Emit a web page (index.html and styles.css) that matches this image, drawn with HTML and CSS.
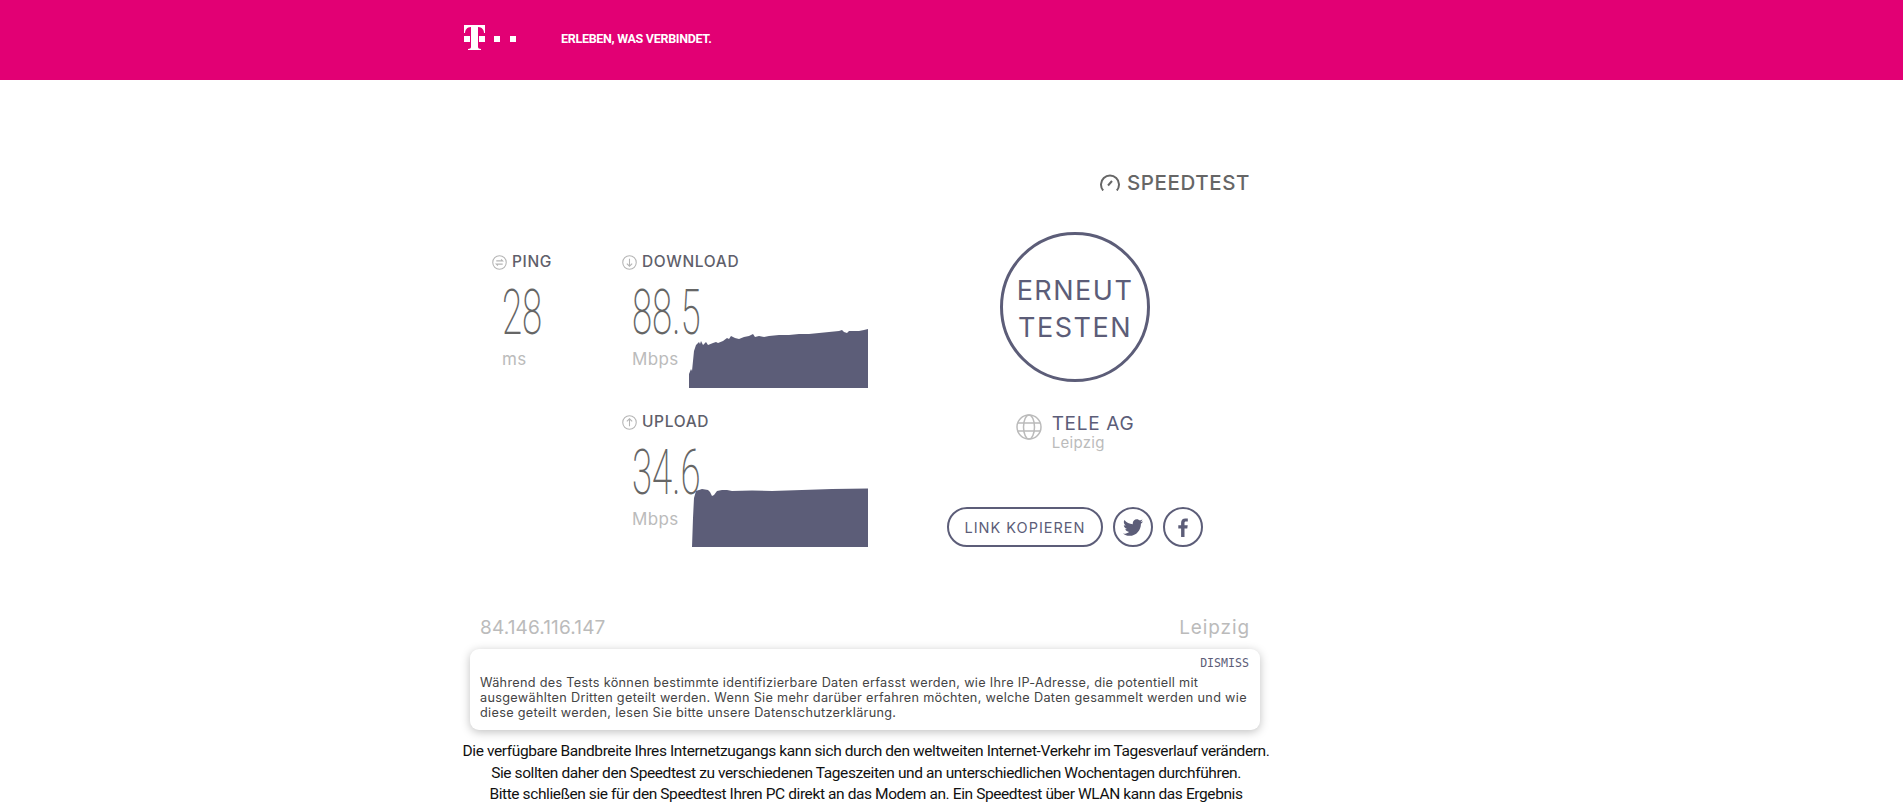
FILE: index.html
```html
<!DOCTYPE html>
<html lang="de">
<head>
    <meta charset="UTF-8">
    <meta name="viewport" content="width=device-width, initial-scale=1.0">
    <title>Speedtest</title>
    <link rel="stylesheet" href="styles.css">
</head>
<body>

<header class="top-bar">
    <svg class="t-logo" width="52" height="26" viewBox="0 0 52 26" fill="#fff">
        <path d="M0 0h21v8h-1c0-3-2-6-6-6v20c0 1 1 2 3 2v1H4v-1c2 0 3-1 3-2V2C3 2 1 5 1 8H0z"/>
        <rect x="0" y="11" width="6" height="6"/>
        <rect x="15" y="11" width="6" height="6"/>
        <rect x="30" y="11" width="6" height="6"/>
        <rect x="46" y="11" width="6" height="6"/>
    </svg>
    <span class="tagline">ERLEBEN, WAS VERBINDET.</span>
</header>

<main class="page">
    <div class="speedtest-brand">
        <svg width="20" height="17" viewBox="0 0 20 17" fill="none" stroke="#666" stroke-width="2">
            <path d="M3.200 16.500A9 9 0 1 1 16.800 16.500"/>
            <path d="M8 11.500l4-4.500"/>
        </svg>
        <span>SPEEDTEST</span>
    </div>

    <section class="results">
        <div class="ping-col">
            <div class="metric-label">
                <svg class="label-icon" viewBox="0 0 14 14" fill="none" stroke="#b5b5b5">
                    <circle cx="7" cy="7" r="6.300"/>
                    <path d="M4 5.500h6L8.500 4M10 8.500H4L5.500 10"/>
                </svg>
                PING
            </div>
            <div class="metric-value">28</div>
            <div class="metric-unit">ms</div>
        </div>

        <div class="speed-col">
            <div class="metric">
                <div class="metric-label">
                    <svg class="label-icon" viewBox="0 0 14 14" fill="none" stroke="#b5b5b5">
                        <circle cx="7" cy="7" r="6.300"/>
                        <path d="M7 3.500v7M4.500 8L7 10.500 9.500 8"/>
                    </svg>
                    DOWNLOAD
                </div>
                <div class="metric-value">88.5</div>
                <div class="metric-unit">Mbps</div>
                <svg class="graph graph-down" width="179" height="59" viewBox="0 0 179 59" fill="#5c5d78">
                    <path d="M0 59V45L2 40 3 42 5 22 7 16 10 13 11 15 12 12 14 16 17 13 19 16 24 14 27 13 29 14 34 12 38 9 40 10 42 7 46 9 50 10 55 8 60 7 64 5 66 8 70 7 75 8 80 7 90 6 100 6 110 5 120 5 130 4 140 3 150 2 153 1 155 3 158 4 160 2 165 2 170 2 175 1 179 0V59z"/>
                </svg>
            </div>
            <div class="metric metric-upload">
                <div class="metric-label">
                    <svg class="label-icon" viewBox="0 0 14 14" fill="none" stroke="#b5b5b5">
                        <circle cx="7" cy="7" r="6.300"/>
                        <path d="M7 10.500v-7M4.500 6L7 3.500 9.500 6"/>
                    </svg>
                    UPLOAD
                </div>
                <div class="metric-value">34.6</div>
                <div class="metric-unit">Mbps</div>
                <svg class="graph graph-up" width="176" height="59" viewBox="0 0 176 59" fill="#5c5d78">
                    <path d="M0 59L1 30 2 10 4 3 10 1 16 2 18 4 20 8 22 7 25 3 30 2 35 2 40 3 60 2.500 80 3 110 2 140 1 176 .5V59z"/>
                </svg>
            </div>
        </div>

        <div class="action-col">
            <button class="go-button">ERNEUT<br>TESTEN</button>
            <div class="isp">
                <svg width="26" height="26" viewBox="0 0 26 26" fill="none" stroke="#bbb" stroke-width="1.500">
                    <circle cx="13" cy="13" r="12"/>
                    <ellipse cx="13" cy="13" rx="5.500" ry="12"/>
                    <path d="M2 9h22M2 17h22"/>
                </svg>
                <div>
                    <div class="isp-name">TELE AG</div>
                    <div class="isp-city">Leipzig</div>
                </div>
            </div>
            <div class="share-row">
                <button class="link-button">LINK KOPIEREN</button>
                <button class="round-button">
                    <svg width="20" height="17" viewBox="0 0 24 20" fill="#5c5d78">
                        <path d="M24 2.400c-.900.400-1.800.700-2.800.800 1-.600 1.800-1.600 2.200-2.700-1 .600-2 1-3.100 1.200C19.300.700 18 0 16.600 0c-2.700 0-4.900 2.200-4.900 4.900 0 .400 0 .800.100 1.100C7.700 5.800 4.100 3.900 1.700.900 1.200 1.700 1 2.500 1 3.400c0 1.700.900 3.200 2.200 4.100-.800 0-1.600-.200-2.200-.600v.100c0 2.400 1.700 4.400 3.900 4.800-.400.100-.800.200-1.300.200-.300 0-.600 0-.900-.100.600 2 2.400 3.400 4.600 3.400-1.700 1.300-3.800 2.100-6.100 2.100-.400 0-.800 0-1.200-.100C2.200 19.300 4.800 20 7.500 20c9.100 0 14-7.500 14-14v-.600c1-.700 1.800-1.600 2.500-3z"/>
                    </svg>
                </button>
                <button class="round-button">
                    <svg width="10" height="19" viewBox="0 0 10 19" fill="#5c5d78">
                        <path d="M6.500 19v-8.500h2.800l.400-3.300H6.500V5.100c0-1 .300-1.600 1.600-1.600h1.700V.600C9.500.500 8.500.400 7.300.400 4.800.400 3.100 1.900 3.100 4.700v2.500H.300v3.300h2.800V19z"/>
                    </svg>
                </button>
            </div>
        </div>
    </section>

    <div class="client-row">
        <span class="client-ip">84.146.116.147</span>
        <span class="client-city">Leipzig</span>
    </div>

    <p class="hint-text">Die verfügbare Bandbreite Ihres Internetzugangs kann sich durch den weltweiten Internet-Verkehr im Tagesverlauf verändern.<br>
    Sie sollten daher den Speedtest zu verschiedenen Tageszeiten und an unterschiedlichen Wochentagen durchführen.<br>
    Bitte schließen sie für den Speedtest Ihren PC direkt an das Modem an. Ein Speedtest über WLAN kann das Ergebnis</p>

    <div class="privacy-notice">
        <div class="dismiss">DISMISS</div>
        <p>Während des Tests können bestimmte identifizierbare Daten erfasst werden, wie Ihre IP-Adresse, die potentiell mit<br>
        ausgewählten Dritten geteilt werden. Wenn Sie mehr darüber erfahren möchten, welche Daten gesammelt werden und wie<br>
        diese geteilt werden, lesen Sie bitte unsere Datenschutzerklärung.</p>
    </div>
</main>

</body>
</html>
```

FILE: styles.css
```css
html, body {
    height: 803px;
    overflow: hidden;
}
body {
    font-family: Inter, "Open Sans", sans-serif;
    background-color: #fff;
    margin: 0;
    color: #333;
}
button {
    font-family: inherit;
    background: #fff;
    cursor: pointer;
    padding: 0;
}
.top-bar {
    height: 80px;
    background-color: #e20074;
    display: flex;
    align-items: flex-start;
    padding-left: 464px;
}
.t-logo {
    margin-top: 25px;
}
.tagline {
    margin: 31px 0 0 45px;
    color: #fff;
    font-family: Roboto, sans-serif;
    font-size: 12.500px;
    font-weight: 700;
    line-height: 15px;
    letter-spacing: -0.3px;
}
.page {
    position: relative;
    width: 810px;
    margin-left: 461px;
    padding-top: 91px;
}
.speedtest-brand {
    display: flex;
    justify-content: flex-end;
    align-items: center;
    gap: 7px;
    padding-right: 21px;
    height: 22px;
    color: #666;
    font-size: 20.500px;
    font-weight: 500;
    letter-spacing: 0.6px;
}
.results {
    display: flex;
    margin-top: 62px;
    height: 300px;
}
.ping-col {
    width: 130px;
    padding-left: 31px;
    box-sizing: border-box;
}
.speed-col {
    width: 323px;
    margin-left: 31px;
}
.metric {
    position: relative;
    height: 160px;
}
.metric-label {
    display: flex;
    align-items: center;
    gap: 5px;
    height: 14px;
    color: #5f5f6b;
    font-size: 15.500px;
    font-weight: 500;
    line-height: 14px;
    letter-spacing: 0.65px;
}
.label-icon {
    width: 15px;
    height: 15px;
}
.metric-value {
    margin: 19px 0 0 10px;
    height: 50px;
    color: #666;
    font-family: Roboto, sans-serif;
    font-size: 63px;
    font-weight: 200;
    line-height: 50px;
    transform: scaleX(0.58);
    transform-origin: left center;
}
.metric-unit {
    margin: 11px 0 0 10px;
    color: #bbb;
    font-size: 17px;
    line-height: 20px;
    letter-spacing: 0.4px;
}
.graph {
    position: absolute;
}
.graph-down {
    left: 67px;
    top: 74px;
}
.graph-up {
    left: 70px;
    top: 73px;
}
.action-col {
    display: flex;
    flex-direction: column;
    align-items: center;
    width: 260px;
    margin-top: -23px;
}
.go-button {
    width: 150px;
    height: 150px;
    padding-top: 4px;
    border: 3px solid #5c5d78;
    border-radius: 50%;
    color: #5c5d78;
    font-size: 27px;
    line-height: 37px;
    letter-spacing: 1.500px;
}
.isp {
    display: flex;
    gap: 10px;
    margin-top: 32px;
}
.isp-name {
    color: #5c5d78;
    font-size: 19px;
    line-height: 20px;
    letter-spacing: 0.7px;
}
.isp-city {
    color: #bbb;
    font-size: 15px;
    line-height: 18px;
    letter-spacing: 0.3px;
}
.share-row {
    display: flex;
    gap: 10px;
    margin-top: 55px;
}
.link-button {
    width: 156px;
    height: 40px;
    border: 2.500px solid #5c5d78;
    border-radius: 20px;
    color: #5c5d78;
    font-size: 14.500px;
    letter-spacing: 1px;
}
.round-button {
    display: flex;
    justify-content: center;
    align-items: center;
    width: 40px;
    height: 40px;
    border: 2.500px solid #5c5d78;
    border-radius: 50%;
}
.client-row {
    display: flex;
    justify-content: space-between;
    margin-top: 62px;
    padding: 0 21px 0 19px;
    color: #bbb;
    font-size: 19px;
    line-height: 22px;
}
.client-ip {
    letter-spacing: 0.15px;
}
.client-city {
    letter-spacing: 0.9px;
}
.hint-text {
    margin: 102px 0 0;
    color: #111;
    font-family: Roboto, sans-serif;
    font-size: 15.500px;
    line-height: 21.700px;
    letter-spacing: -0.4px;
    text-align: center;
    white-space: nowrap;
}
.privacy-notice {
    position: absolute;
    left: 9px;
    top: 569px;
    width: 790px;
    height: 81px;
    box-sizing: border-box;
    padding: 7px 11px 0 10px;
    background-color: #fff;
    border-radius: 9px;
    box-shadow: 0 2px 10px rgba(0, 0, 0, 0.25);
}
.dismiss {
    color: #5c5d78;
    font-family: "DejaVu Sans Mono", monospace;
    font-size: 11.600px;
    line-height: 14px;
    text-align: right;
}
.privacy-notice p {
    margin: 5px 0 0;
    color: #444;
    font-size: 12.700px;
    line-height: 15px;
    letter-spacing: 0.3px;
    white-space: nowrap;
}
```
